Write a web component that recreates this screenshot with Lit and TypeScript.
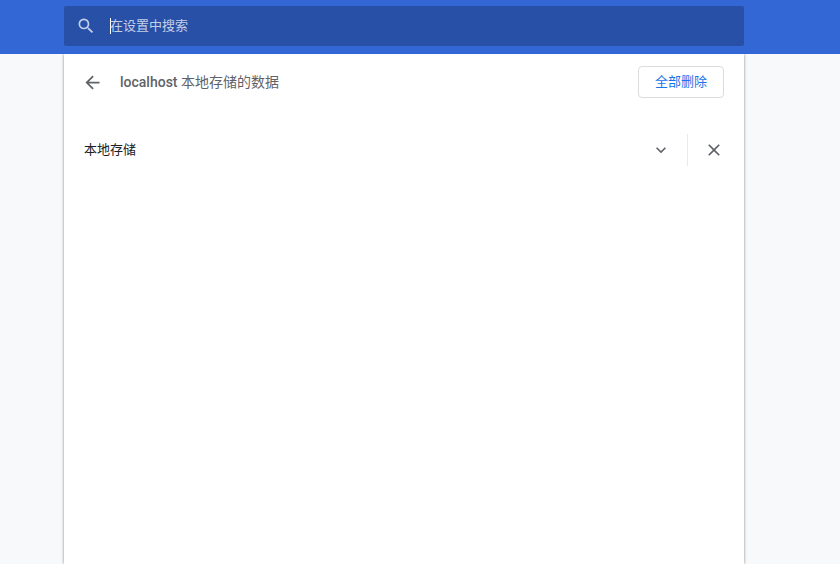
import { LitElement, html, css } from "lit";
import { customElement } from "lit/decorators.js";

@customElement("app-root")
export class AppRoot extends LitElement {
  static styles = css`
    :host {
      display: flex;
      flex-direction: column;
      width: 840px;
      height: 564px;
      overflow: hidden;
      background: #f8f9fa;
      font-family: Roboto, "Noto Sans CJK SC", sans-serif;
      font-size: 13px;
      line-height: 20px;
    }
    .toolbar {
      flex: none;
      height: 54px;
      box-sizing: border-box;
      background: #3367d6;
      padding: 6px 96px 8px 64px;
      position: relative;
      z-index: 1;
    }
    .search {
      height: 40px;
      background: #2850a7;
      border-radius: 2px;
      display: flex;
      align-items: center;
      color: #c3cfe8;
      font-size: 13px;
    }
    .search svg {
      margin-left: 12px;
      width: 20px;
      height: 20px;
      fill: #c3d0ec;
      flex: none;
    }
    .caret {
      width: 1px;
      height: 16px;
      background: #fff;
      margin-left: 14px;
      flex: none;
    }
    .search span {
      margin-left: -1px;
    }
    .card {
      flex: 1;
      margin: 0 96px 0 64px;
      background: #fff;
      box-shadow: 0 0 3px rgba(60, 64, 67, 0.45), 0 1px 2px rgba(60, 64, 67, 0.2);
      display: flex;
      flex-direction: column;
    }
    .head {
      display: flex;
      align-items: center;
      height: 56px;
      padding: 0 20px 0 18px;
    }
    .back {
      width: 21px;
      height: 21px;
      fill: #5f6368;
      flex: none;
    }
    .title {
      margin-left: 17px;
      flex: 1;
      color: #5f6368;
      font-size: 14px;
      font-weight: 500;
    }
    .title span {
      font-weight: 400;
    }
    .btn {
      width: 86px;
      height: 32px;
      box-sizing: border-box;
      border: 1px solid #dadce0;
      border-radius: 4px;
      background: #fff;
      color: #1a73e8;
      font: inherit;
      font-size: 13px;
      padding: 0;
    }
    .row {
      display: flex;
      align-items: center;
      margin-top: 24px;
      height: 32px;
      padding: 0 20px;
      color: #202124;
    }
    .label { flex: 1; }
    .chev {
      width: 20px;
      height: 20px;
      fill: #5f6368;
      flex: none;
    }
    .sep {
      width: 1px;
      height: 32px;
      background: #e8eaed;
      margin: 0 16px 0 16px;
      flex: none;
    }
    .close {
      width: 20px;
      height: 20px;
      fill: #5f6368;
      flex: none;
    }
  `;

  render() {
    return html`
      <div class="toolbar">
        <div class="search">
          <svg viewBox="0 0 24 24"><path d="M15.5 14h-.79l-.28-.27A6.47 6.47 0 0 0 16 9.5 6.5 6.5 0 1 0 9.5 16c1.61 0 3.09-.59 4.23-1.57l.27.28v.79l5 4.99L20.49 19l-4.99-5zm-6 0C7.01 14 5 11.99 5 9.5S7.01 5 9.5 5 14 7.01 14 9.5 11.99 14 9.5 14z"/></svg>
          <div class="caret"></div>
          <span>在设置中搜索</span>
        </div>
      </div>
      <div class="card">
        <div class="head">
          <svg class="back" viewBox="0 0 24 24"><path d="M20 11H7.83l5.59-5.59L12 4l-8 8 8 8 1.41-1.41L7.83 13H20v-2z"/></svg>
          <div class="title">localhost <span>本地存储的数据</span></div>
          <button class="btn">全部删除</button>
        </div>
        <div class="row">
          <div class="label">本地存储</div>
          <svg class="chev" viewBox="0 0 24 24"><path d="M16.59 8.59 12 13.17 7.41 8.59 6 10l6 6 6-6z"/></svg>
          <div class="sep"></div>
          <svg class="close" viewBox="0 0 24 24"><path d="M19 6.41 17.59 5 12 10.59 6.41 5 5 6.41 10.59 12 5 17.59 6.41 19 12 13.41 17.59 19 19 17.59 13.41 12z"/></svg>
        </div>
      </div>
    `;
  }
}
